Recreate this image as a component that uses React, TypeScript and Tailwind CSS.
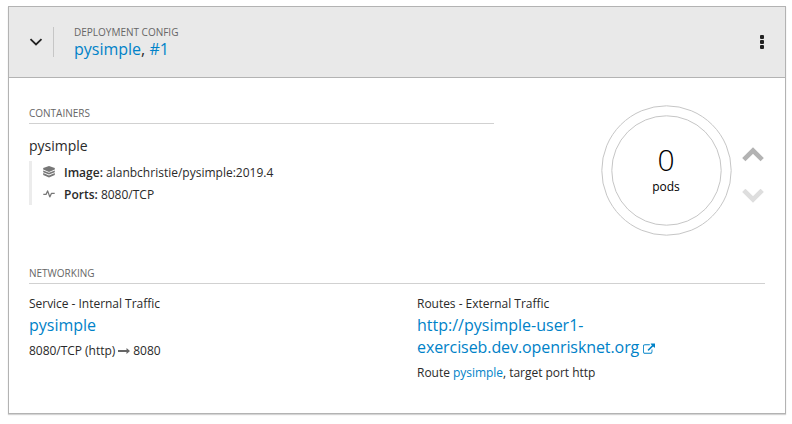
import type { ReactNode } from "react";

function SectionTitle({ children }: { children: ReactNode }) {
  return (
    <h3 className="h-[17px] border-b border-[#d1d1d1] text-[10px] leading-[12px] text-[#666] uppercase">
      {children}
    </h3>
  );
}

function LayersIcon() {
  return (
    <svg className="h-3 w-3" viewBox="0 0 12 12" fill="#777">
      <path d="M6 0 11.8 1.9V3.6L6 6 .2 3.6V1.9z" />
      <path d="M.2 4.4 6 6.8l5.8-2.4v1.8L6 8.6.2 6.2z" />
      <path d="M.2 7 6 9.4 11.8 7v2.1L6 11.6.2 9.1z" />
    </svg>
  );
}

function PulseIcon() {
  return (
    <svg className="h-3 w-3" viewBox="0 0 12 12" fill="none" stroke="#777" strokeWidth="1.3" strokeLinejoin="round">
      <path d="M.3 6.4H3L4.6 2.9 6.8 8.9 8.4 5.4H11.7" />
    </svg>
  );
}

function ExternalLinkIcon() {
  return (
    <svg className="ml-1 inline-block h-3 w-3 align-[-2px]" viewBox="0 0 1792 1664" fill="currentColor">
      <path d="M1408 928v320q0 119-84.5 203.5t-203.5 84.5h-832q-119 0-203.5-84.5t-84.5-203.5v-832q0-119 84.5-203.5t203.5-84.5h704q14 0 23 9t9 23v64q0 14-9 23t-23 9h-704q-66 0-113 47t-47 113v832q0 66 47 113t113 47h832q66 0 113-47t47-113v-320q0-14 9-23t23-9h64q14 0 23 9t9 23zm384-864v512q0 26-19 45t-45 19-45-19l-176-176-652 652q-10 10-23 10t-23-10l-114-114q-10-10-10-23t10-23l652-652-176-176q-19-19-19-45t19-45 45-19h512q26 0 45 19t19 45z" />
    </svg>
  );
}

function PodDonut() {
  return (
    <svg className="h-[132px] w-[132px]" viewBox="0 0 132 132">
      <circle cx="66.5" cy="65.5" r="64.7" fill="none" stroke="#c6c6c6" />
      <circle cx="66.5" cy="65.5" r="54.7" fill="none" stroke="#c6c6c6" />
      <text x="66" y="66" textAnchor="middle" className="fill-black text-[30px] font-light">0</text>
      <text x="66" y="86" textAnchor="middle" className="fill-black text-[12px]">pods</text>
    </svg>
  );
}

export default function App() {
  return (
    <main className="h-[424px] w-[792px] bg-white pt-[6px] pl-[8px] font-['Open_Sans','Noto_Sans',sans-serif] text-[12px] text-[#2a2a2a]">
      <article className="h-[408px] w-[778px] border border-[#b3b3b3] shadow-[0_1px_1px_rgba(0,0,0,0.17)]">
        <header className="flex h-[71px] items-center border-b border-[#b3b3b3] bg-[#e9e9e9]">
          <button className="ml-[20px] flex h-[30px] w-[25px] items-center border-r border-[#c6c6c6]">
            <svg className="h-[14px] w-[14px]" viewBox="0 0 14 14" fill="none" stroke="#222" strokeWidth="1.8">
              <path d="M1.5 4.2 7 9.5 12.5 4.2" />
            </svg>
          </button>
          <div className="ml-[20px] h-[32px]">
            <div className="h-[14px] text-[10px] leading-[12px] text-[#666] uppercase">Deployment Config</div>
            <div className="text-[16px] leading-[18px]">
              <a className="text-[#0082c8]">pysimple</a>, <a className="text-[#0082c8]">#1</a>
            </div>
          </div>
          <button className="mr-[21px] ml-auto flex flex-col gap-px">
            <span className="h-1 w-1 rounded-[1px] bg-[#222]" />
            <span className="h-1 w-1 rounded-[1px] bg-[#222]" />
            <span className="h-1 w-1 rounded-[1px] bg-[#222]" />
          </button>
        </header>

        <div className="px-[20px]">
          <div className="flex h-[189px]">
            <section className="w-[465px] pt-[29px]">
              <SectionTitle>Containers</SectionTitle>
              <div className="mt-[12px] text-[14px] leading-[20px]">pysimple</div>
              <ul className="mt-[5px] w-max border-l-3 border-[#ececec] pl-[11px]">
                <li className="flex h-[22px] items-center gap-[9px]">
                  <LayersIcon />
                  <span className="pt-[2px] leading-[20px]"><b className="font-semibold">Image:</b> alanbchristie/pysimple:2019.4</span>
                </li>
                <li className="flex h-[22px] items-center gap-[9px]">
                  <PulseIcon />
                  <span className="pt-[2px] leading-[20px]"><b className="font-semibold">Ports:</b> 8080/TCP</span>
                </li>
              </ul>
            </section>
            <div className="ml-[106px] flex pt-[27px]">
              <PodDonut />
              <div className="ml-[9px] flex flex-col pt-[42px]">
                <svg className="h-[16px] w-[24px]" viewBox="0 0 24 16" fill="none" stroke="#b3b3b3" strokeWidth="4.6">
                  <path d="M2.8 12.7 12 3.5 21.2 12.7" />
                </svg>
                <svg className="mt-[26px] h-[16px] w-[24px]" viewBox="0 0 24 16" fill="none" stroke="#dedede" strokeWidth="4.6">
                  <path d="M2.8 1.3 12 10.5 21.2 1.3" />
                </svg>
              </div>
            </div>
          </div>

          <section>
            <SectionTitle>Networking</SectionTitle>
            <div className="mt-[10px] flex">
              <div className="w-[388px]">
                <div className="leading-[20px] tracking-[-0.03px]">Service - Internal Traffic</div>
                <a className="block text-[16px] leading-[22px] text-[#0082c8]">pysimple</a>
                <div className="mt-[5px] flex items-center leading-[20px] tracking-[-0.03px]">
                  <span>8080/TCP (http)</span>
                  <svg className="mx-[3px] h-[8px] w-[12px]" viewBox="0 0 12 8" fill="#666">
                    <path d="M0 3H8.5V1L12 4 8.5 7V5H0z" />
                  </svg>
                  <span>8080</span>
                </div>
              </div>
              <div className="flex-1">
                <div className="leading-[20px] tracking-[-0.03px]">Routes - External Traffic</div>
                <a className="block text-[16px] leading-[22px] text-[#0082c8]">
                  http://pysimple-user1-
                  <br />
                  <span className="tracking-[-0.08px]">exerciseb.dev.openrisknet.org</span>
                  <ExternalLinkIcon />
                </a>
                <div className="mt-[5px] leading-[20px] tracking-[-0.03px]">
                  Route <a className="text-[#0082c8]">pysimple</a>, target port http
                </div>
              </div>
            </div>
          </section>
        </div>
      </article>
    </main>
  );
}
